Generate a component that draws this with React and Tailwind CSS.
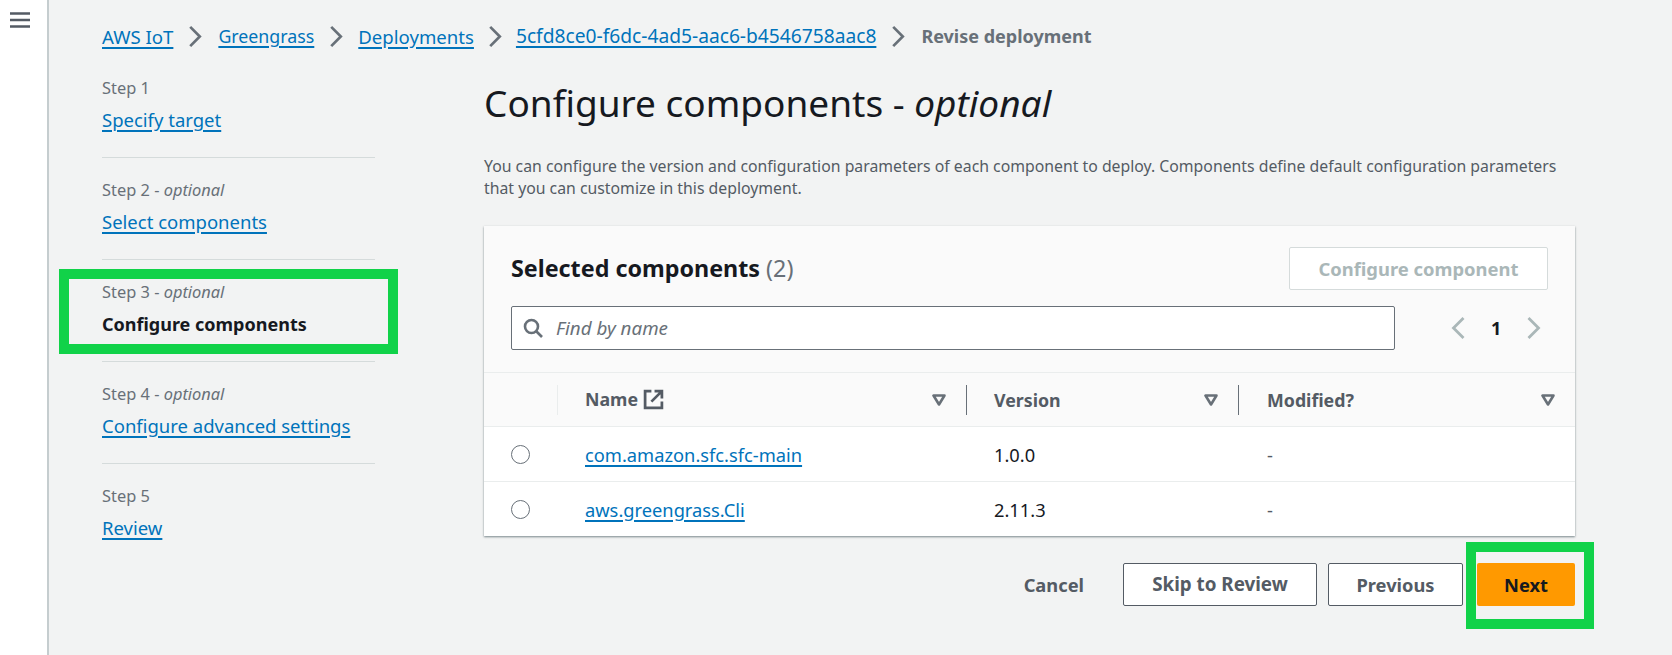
import { Fragment } from "react"

const font = { fontFamily: '"Noto Sans", sans-serif' }

const steps = [
  { label: "Step 1", link: "Specify target" },
  { label: "Step 2", optional: true, link: "Select components" },
  { label: "Step 3", optional: true, link: "Configure components", active: true },
  { label: "Step 4", optional: true, link: "Configure advanced settings" },
  { label: "Step 5", link: "Review" },
]

const rows = [
  { name: "com.amazon.sfc.sfc-main", version: "1.0.0" },
  { name: "aws.greengrass.Cli", version: "2.11.3" },
]

function Chevron({ left, className }) {
  return (
    <svg viewBox="0 0 14 24" className={className} fill="none" stroke="currentColor" strokeWidth="2.8">
      <path d={left ? "M12 2 2 12l10 10" : "M2 2l10 10L2 22"} />
    </svg>
  )
}

function FilterIcon() {
  return (
    <svg viewBox="0 0 14 12" className="w-[14px] h-[12px] text-[#687078]" fill="none" stroke="currentColor" strokeWidth="2.6" strokeLinejoin="round">
      <path d="M1.5 1.5h11L7 10.5z" />
    </svg>
  )
}

function ExternalIcon() {
  return (
    <svg viewBox="0 0 20 20" className="w-[21px] h-[21px] text-[#545b64]" fill="none" stroke="currentColor" strokeWidth="2.6">
      <path d="M8 2H2v16h16v-6" />
      <path d="M11 2h7v7M18 2 8 12" />
    </svg>
  )
}

function Breadcrumb({ children, current, className = "text-[18.6px]" }) {
  return current ? (
    <span className="font-bold text-[#687078] text-[18px]">{children}</span>
  ) : (
    <a className={`text-[#0073bb] underline underline-offset-[3px] decoration-2 ${className}`}>{children}</a>
  )
}

function HeaderCell({ children, separator, className = "pl-[27px]" }) {
  return (
    <div className={`relative flex items-center justify-between h-full pr-[20px] font-bold text-[#545b64] text-[17.8px] ${className}`}>
      {separator && <span className="absolute left-0 top-[12px] h-[30px] w-px bg-[#687078]" />}
      {children}
    </div>
  )
}

export default function App() {
  return (
    <div className="flex w-[1672px] h-[655px] overflow-hidden bg-white" style={font}>
      <div className="w-[49px] shrink-0 bg-white border-r-2 border-[#c5cdcf] pl-[10px] pt-[12px]">
        <svg viewBox="0 0 20 16" className="w-[20px] h-[16px] text-[#545b64]" fill="none" stroke="currentColor" strokeWidth="2.4">
          <path d="M0 1.5h20M0 8h20M0 14.5h20" />
        </svg>
      </div>

      <div className="flex-1 bg-[#f2f3f3] pl-[53px]">
        <nav className="h-[72px] pt-[1px] flex items-center">
          <Breadcrumb>AWS IoT</Breadcrumb>
          <Chevron className="w-[14px] h-[23px] ml-[15px] mr-[16px] text-[#687078]" />
          <Breadcrumb className="text-[17.8px]">Greengrass</Breadcrumb>
          <Chevron className="w-[14px] h-[23px] mx-[15px] text-[#687078]" />
          <Breadcrumb>Deployments</Breadcrumb>
          <Chevron className="w-[14px] h-[23px] mx-[14px] text-[#687078]" />
          <Breadcrumb className="text-[19.2px]">5cfd8ce0-f6dc-4ad5-aac6-b4546758aac8</Breadcrumb>
          <Chevron className="w-[14px] h-[23px] ml-[15px] mr-[16px] text-[#687078]" />
          <Breadcrumb current>Revise deployment</Breadcrumb>
        </nav>

        <div className="flex">
          <aside className="w-[273px] shrink-0 pt-[6px] mr-[109px]">
            {steps.map((s, i) => (
              <div key={s.label} className={`relative pb-[25px] mb-[22px] ${i < 4 ? "border-b border-[#d5dbdb]" : ""}`}>
                <div className="h-[20px] leading-[20px] text-[16.4px] text-[#687078]">
                  {s.label}
                  {s.optional && <span> - <i>optional</i></span>}
                </div>
                {s.active ? (
                  <div className="mt-[10px] h-[24px] leading-[24px] text-[18px] font-bold text-[#16191f]">{s.link}</div>
                ) : (
                  <a className="block mt-[10px] h-[24px] leading-[24px] text-[18.5px] text-[#0073bb] underline underline-offset-[3px] decoration-2">{s.link}</a>
                )}
                {s.active && (
                  <div className="absolute left-[-43px] top-[-13px] w-[339px] h-[85px] border-[10px] border-[#11d249]" />
                )}
              </div>
            ))}
          </aside>

          <main className="w-[1091px] shrink-0">
            <h1 className="mt-[9px] h-[44px] leading-[44px] text-[37px] text-[#16191f] font-normal whitespace-nowrap">
              Configure components - <i>optional</i>
            </h1>
            <p className="mt-[30px] text-[15.8px] leading-[22px] text-[#545b64] w-[1075px]">
              You can configure the version and configuration parameters of each component to deploy. Components define default configuration parameters that you can customize in this deployment.
            </p>

            <section className="mt-[27px] bg-white shadow-[0_1px_2px_rgba(0,28,36,0.5)]">
              <div className="bg-[#fafafa] px-[27px] pt-[21px] pb-[22px] border-b border-[#eaeded]">
                <div className="flex items-center justify-between h-[43px]">
                  <h2 className="text-[23.3px] font-bold text-[#16191f]">
                    Selected components <span className="font-normal text-[#687078]">(2)</span>
                  </h2>
                  <button className="w-[259px] h-[43px] bg-white border border-[#d5dbdb] rounded-[2px] text-[18.4px] font-bold text-[#aab7b8]">
                    Configure component
                  </button>
                </div>
                <div className="mt-[16px] flex items-center">
                  <div className="w-[884px] h-[44px] bg-white border border-[#687078] rounded-[2px] flex items-center pl-[11px] gap-[13px]">
                    <svg viewBox="0 0 20 20" className="w-[20px] h-[20px] text-[#687078]" fill="none" stroke="currentColor" strokeWidth="2.6">
                      <circle cx="8.5" cy="8.5" r="6.5" />
                      <path d="M13 13l6 6" />
                    </svg>
                    <span className="italic text-[18.8px] text-[#687078]">Find by name</span>
                  </div>
                  <div className="ml-[56px] flex items-center">
                    <Chevron left className="w-[15px] h-[24px] text-[#aab7b8]" />
                    <span className="mx-[25px] text-[18px] font-bold text-[#16191f]">1</span>
                    <Chevron className="w-[15px] h-[24px] text-[#aab7b8]" />
                  </div>
                </div>
              </div>

              <div className="grid grid-cols-[74px_408px_272px_1fr]">
                <div className="h-[54px] bg-[#fafafa] border-b border-[#eaeded]">
                  <span className="block ml-[73px] mt-[12px] h-[30px] w-px bg-[#eaeded]" />
                </div>
                <div className="h-[54px] bg-[#fafafa] border-b border-[#eaeded]">
                  <HeaderCell>
                    <span className="flex items-center gap-[5px]">Name <ExternalIcon /></span>
                    <FilterIcon />
                  </HeaderCell>
                </div>
                <div className="h-[54px] bg-[#fafafa] border-b border-[#eaeded]">
                  <HeaderCell separator className="pl-[28px] pt-[1px]">
                    Version
                    <FilterIcon />
                  </HeaderCell>
                </div>
                <div className="h-[54px] bg-[#fafafa] border-b border-[#eaeded]">
                  <HeaderCell separator className="pl-[29px] pt-[1px]">
                    Modified?
                    <FilterIcon />
                  </HeaderCell>
                </div>

                {rows.map((r, i) => {
                  const rowClass = `flex items-center pt-[1px] text-[18.3px] ${i === 0 ? "h-[55px] border-b border-[#eaeded]" : "h-[54px]"}`
                  return (
                    <Fragment key={r.name}>
                      <div className={`${rowClass} pl-[27px]`}>
                        <span className="w-[19px] h-[19px] rounded-full border-[1.5px] border-[#687078] bg-white" />
                      </div>
                      <div className={`${rowClass} pl-[27px]`}>
                        <a className="text-[#0073bb] underline underline-offset-[3px] decoration-2">{r.name}</a>
                      </div>
                      <div className={`${rowClass} pl-[28px] text-[#16191f]`}>{r.version}</div>
                      <div className={`${rowClass} pl-[29px] text-[#545b64]`}>-</div>
                    </Fragment>
                  )
                })}
              </div>
            </section>

            <div className="mt-[27px] flex items-center justify-end text-[18.3px] font-bold text-[#545b64]">
              <span className="mr-[39px]">Cancel</span>
              <button className="w-[194px] h-[43px] bg-white border border-[#545b64] rounded-[2px] text-[18.8px]">Skip to Review</button>
              <button className="ml-[11px] w-[135px] h-[43px] bg-white border border-[#545b64] rounded-[2px]">Previous</button>
              <div className="relative ml-[14px]">
                <button className="block w-[98px] h-[43px] bg-[#ff9900] rounded-[2px] text-[#16191f]">Next</button>
                <div className="absolute left-[-11px] top-[-21px] w-[128px] h-[87px] border-[10px] border-[#11d249]" />
              </div>
            </div>
          </main>
        </div>
      </div>
    </div>
  )
}
